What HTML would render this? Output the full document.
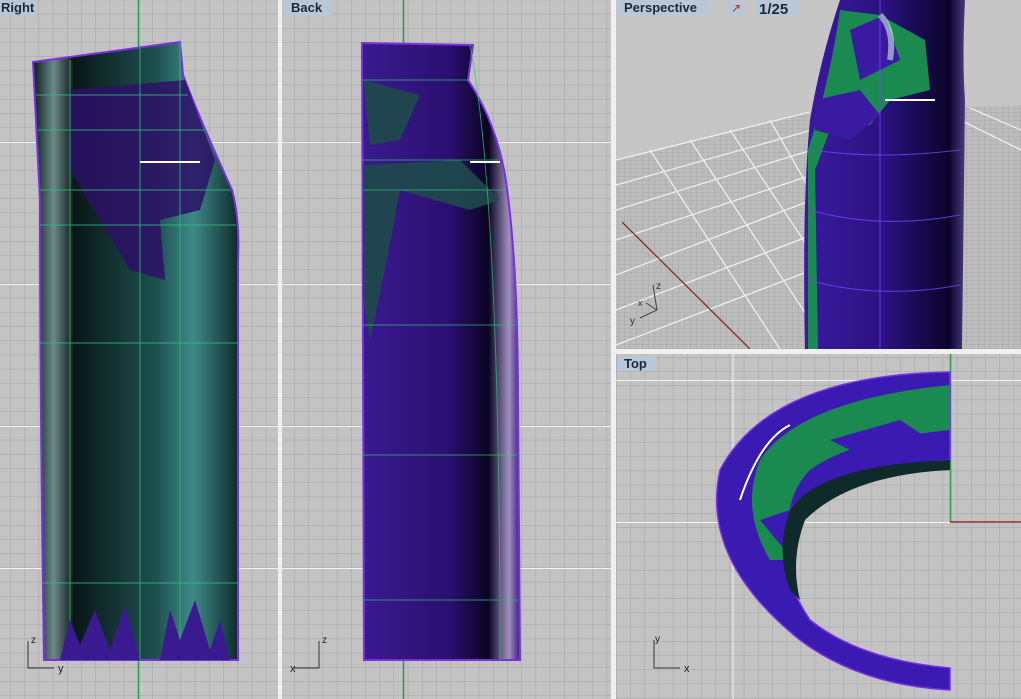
<!DOCTYPE html>
<html><head><style>
body{margin:0;width:1021px;height:699px;overflow:hidden;background:#fff;font-family:"Liberation Sans",sans-serif}
svg{display:block}
.lbl{font:bold 13px "Liberation Sans",sans-serif;fill:#1a2a3a}
</style></head><body>
<svg width="1021" height="699" viewBox="0 0 1021 699">
<defs>
<pattern id="g" width="14.2" height="14.2" patternUnits="userSpaceOnUse" x="-4" y="-0.4">
<rect width="14.2" height="14.2" fill="#c3c3c3"/>
<path d="M0 0H14.2M0 0V14.2" stroke="#a3a3a3" stroke-width="1"/>
</pattern>
<pattern id="gp" width="14.2" height="14.2" patternUnits="userSpaceOnUse" x="616" y="2">
<rect width="14.2" height="14.2" fill="#c3c3c3"/>
<path d="M0 0H14.2M0 0V14.2" stroke="#a3a3a3" stroke-width="1"/>
</pattern>
<linearGradient id="teal" x1="0" x2="1">
<stop offset="0" stop-color="#0b1a1a"/><stop offset="0.1" stop-color="#6a8a88"/><stop offset="0.2" stop-color="#0a1616"/>
<stop offset="0.6" stop-color="#1e5050"/><stop offset="0.78" stop-color="#3e8a88"/><stop offset="1" stop-color="#0e2a2a"/>
</linearGradient>
<linearGradient id="purp" x1="0" x2="1">
<stop offset="0" stop-color="#3a1a90"/><stop offset="0.55" stop-color="#2a1070"/><stop offset="0.8" stop-color="#0a0420"/><stop offset="0.93" stop-color="#a090c0"/><stop offset="1" stop-color="#3a1a80"/>
</linearGradient>
<linearGradient id="pp" x1="0" x2="1">
<stop offset="0" stop-color="#3a1aa0"/><stop offset="0.5" stop-color="#2a1280"/><stop offset="0.9" stop-color="#0a0428"/><stop offset="1" stop-color="#4a3a80"/>
</linearGradient>
<pattern id="floor" width="6" height="4" patternUnits="userSpaceOnUse">
<rect width="6" height="4" fill="#bdbdbd"/><path d="M0 0H6M0 0V4" stroke="#9a9a9a" stroke-width="0.6"/>
</pattern>
</defs>

<rect x="0" y="0" width="278" height="699" fill="url(#g)"/>
<path d="M0 142.5H278M0 284.5H278M0 426.5H278M0 568.5H278" stroke="#f2f2f2"/>
<path d="M138.5 0V699" stroke="#2a9a4a" stroke-width="1.5"/>
<path d="M33 62 L180 42 L183 75 Q200 120 232 190 Q240 220 238 260 L238 660 L44 660 Q40 400 40 200 Z" fill="url(#teal)" stroke="#7a30e0" stroke-width="2"/>
<path d="M70 90 L185 80 Q200 120 215 160 L200 210 L160 220 L165 280 L130 270 L100 220 L70 170 Z" fill="#2c1066" opacity="0.85"/>
<path d="M36 95H188M38 130H205M40 190H230M40 225H236M40 343H238M42 583H238M70 60V660M140 45V660M180 42V660" stroke="#30c080" stroke-width="1" fill="none" opacity="0.8"/>
<path d="M140 162H200" stroke="#fff" stroke-width="2"/>
<path d="M60 660 L70 620 L80 645 L95 610 L110 650 L125 605 L140 660Z M160 660 L170 610 L180 640 L195 600 L210 650 L220 620 L230 660Z" fill="#3a1a90"/>
<rect x="0" y="0" width="36" height="15" fill="#b8c8d8"/><text x="1" y="12" class="lbl">Right</text>
<path d="M28 641V668H54" stroke="#333" fill="none"/><text x="31" y="643" font-size="10" fill="#222">z</text><text x="58" y="672" font-size="11" fill="#222">y</text>

<rect x="278" y="0" width="4" height="699" fill="#f0f0f0"/>

<rect x="282" y="0" width="329" height="699" fill="url(#g)"/>
<path d="M282 142.5H611M282 284.5H611M282 426.5H611M282 568.5H611" stroke="#f2f2f2"/>
<path d="M403.5 0V699" stroke="#2a9a4a" stroke-width="1.5"/>
<path d="M362 43 L473 45 L468 80 Q495 120 505 175 Q518 260 518 400 L520 660 L364 660 Z" fill="url(#purp)" stroke="#7a30e0" stroke-width="2"/>
<path d="M363 80 L420 95 L400 140 L370 145 Z M363 165 L460 160 L500 200 L470 210 L400 190 L385 270 L370 340 L363 300 Z" fill="#1e4a4a" opacity="0.9"/>
<path d="M362 80H470M362 160H498M362 190H505M362 325H517M362 455H517M362 600H518M470 45Q500 200 500 660" stroke="#30c080" fill="none" opacity="0.7"/>
<path d="M470 162H500" stroke="#fff" stroke-width="2"/>
<rect x="284" y="0" width="48" height="15" fill="#b8c8d8"/><text x="291" y="12" class="lbl">Back</text>
<path d="M319 641V668H294" stroke="#333" fill="none"/><text x="322" y="643" font-size="10" fill="#222">z</text><text x="290" y="672" font-size="11" fill="#222">x</text>

<rect x="611" y="0" width="5" height="699" fill="#f0f0f0"/>

<rect x="616" y="0" width="405" height="349" fill="#c6c6c6"/>
<path d="M616 160 L810 112 L1021 105 L1021 349 L616 349 Z" fill="url(#floor)"/>
<path d="M616 160L810 112M616 185L812 130M616 210L812 150M616 240L812 175M616 275L812 200M616 310L812 235M616 345L812 270M650 150L780 349M690 140L810 320M730 130L810 250M770 120L810 190M940 110L1021 150M970 108L1021 130" stroke="#eee" stroke-width="1.3"/>
<path d="M622 222L750 349" stroke="#8a2a2a" stroke-width="1.3"/>
<path d="M840 0 L965 0 Q962 60 965 100 L962 349 L805 349 Q802 200 810 120 Q820 60 840 0Z" fill="url(#pp)"/>
<path d="M840 10 Q830 80 808 150 L808 349 L818 349 L815 170 L830 130 L870 125 L890 100 L930 90 L925 40 L880 15Z" fill="#1a8a50"/>
<path d="M850 30 L885 15 L900 60 L860 80 Z M815 100 L860 90 L880 115 L850 140 L815 130Z" fill="#3a1aa0"/>
<path d="M880 15 Q895 30 890 60" stroke="#d0f0e0" stroke-width="6" opacity="0.6" fill="none"/>
<path d="M810 210Q880 230 960 215M808 280Q880 300 960 285M812 150Q880 160 960 150M880 0V349" stroke="#7a40ff" fill="none" opacity="0.8"/>
<path d="M885 100H935" stroke="#fff" stroke-width="2"/>
<rect x="618" y="0" width="92" height="15" fill="#b8c8d8"/><text x="624" y="12" class="lbl">Perspective</text>
<rect x="727" y="0" width="16" height="15" fill="#b8c8d8"/><text x="731" y="12" font-size="12" fill="#c02020">↗</text>
<rect x="755" y="0" width="45" height="15" fill="#b8c8d8"/><text x="759" y="14" style="font:bold 15px 'Liberation Sans'" fill="#1a2a3a">1/25</text>
<path d="M653 285L657 310L640 318M657 310L646 303" stroke="#444" fill="none"/><text x="656" y="289" font-size="10" fill="#333">z</text><text x="630" y="324" font-size="10" fill="#333">y</text><text x="638" y="306" font-size="9" fill="#333">x</text>

<rect x="616" y="349" width="405" height="5" fill="#f0f0f0"/>

<rect x="616" y="354" width="405" height="345" fill="url(#gp)"/>
<path d="M733 354V699M616 380.5H1021M616 522.5H1021" stroke="#f2f2f2"/>
<path d="M950.5 354V522" stroke="#2a9a4a" stroke-width="1.5"/>
<path d="M950 522H1021" stroke="#8a2a2a" stroke-width="1.5"/>
<path d="M950 372 Q770 375 720 470 Q700 560 800 640 Q860 685 950 690 L950 668 Q860 660 810 620 Q770 560 790 510 Q820 470 950 460 Z" fill="#3a1ab0" stroke="#7a30e0" stroke-width="1.5"/>
<path d="M950 385 Q800 400 760 460 Q740 510 770 560 L790 560 Q780 500 810 470 Q850 440 950 430Z" fill="#1a8a50"/>
<path d="M830 440 L900 420 L930 440 L870 460Z M760 520L790 510 L785 550Z" fill="#3a1ab0"/>
<path d="M790 510 Q820 465 950 460 L950 470 Q850 475 805 520 Q790 560 800 600 L790 590 Q775 550 790 510Z" fill="#0e2a2a"/>
<path d="M740 500 Q760 440 790 425" stroke="#fff" stroke-width="2" fill="none"/>
<rect x="618" y="356" width="38" height="15" fill="#b8c8d8"/><text x="624" y="368" class="lbl">Top</text>
<path d="M654 640V668H680" stroke="#333" fill="none"/><text x="655" y="642" font-size="10" fill="#222">y</text><text x="684" y="672" font-size="11" fill="#222">x</text>
</svg>
</body></html>
